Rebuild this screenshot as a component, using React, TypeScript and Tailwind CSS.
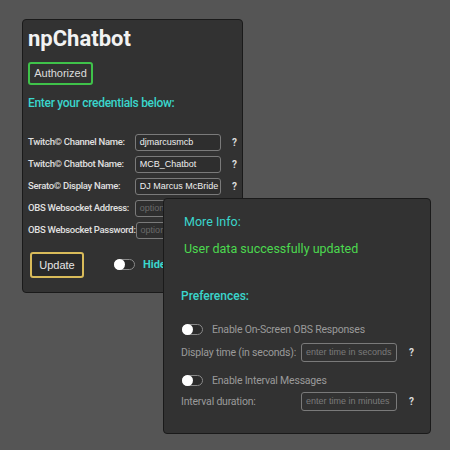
import React from "react";

const FONT = { fontFamily: 'Roboto, "Noto Sans", sans-serif' };
const ARIAL = { fontFamily: '"Liberation Sans", Arial, sans-serif' };

const CREDS = [
  { label: "Twitch© Channel Name:", value: "djmarcusmcb" },
  { label: "Twitch© Chatbot Name:", value: "MCB_Chatbot" },
  { label: "Serato© Display Name:", value: "DJ Marcus McBride" },
  { label: "OBS Websocket Address:", value: "" },
  { label: "OBS Websocket Password:", value: "" },
];

function Toggle() {
  return (
    <span className="relative inline-block w-[21px] h-[11px] rounded-full border border-[#8a8a8a] bg-[#2b2b2b] shrink-0">
      <span className="absolute left-[-1px] top-[-1px] w-[11px] h-[11px] rounded-full bg-white" />
    </span>
  );
}

export default function App() {
  return (
    <div className="relative w-[450px] h-[450px] bg-[#555555] overflow-hidden" style={FONT}>
      {/* main window */}
      <div className="ml-[22px] mt-[19px] w-[221px] h-[274px] bg-[#323232] border border-[#1a1a1a] rounded-[4px] px-[5px] pt-[5px]">
        <h1 className="text-[22px] leading-[28px] font-bold text-[#f2f2f2]">npChatbot</h1>
        <button
          className="mt-[9px] w-[65px] h-[23px] rounded-[3px] border-2 border-[#3fc24a] text-[11px] text-[#dcdcdc]"
          style={ARIAL}
        >
          Authorized
        </button>
        <p className="mt-[9px] text-[12px] leading-[18px] font-medium tracking-[-0.3px] text-[#3ad6cc]">
          Enter your credentials below:
        </p>

        <div className="mt-[22px] flex flex-col gap-[5px]">
          {CREDS.map((c) => (
            <div key={c.label} className="flex items-center h-[17px]">
              <span className="w-[108px] text-[9.5px] font-medium tracking-[-0.3px] text-[#e0e0e0] whitespace-nowrap">
                {c.label}
              </span>
              <div
                className="w-[87px] h-[17px] rounded-[3px] border border-[#7a7a7a] bg-[#2e2e2e] px-[4px] flex items-center text-[9px] whitespace-nowrap overflow-hidden"
                style={ARIAL}
              >
                {c.value ? (
                  <span className="text-[#eeeeee]">{c.value}</span>
                ) : (
                  <span className="text-[#6a6a6a]">optional</span>
                )}
              </div>
              <span className="ml-[11px] text-[10px] font-bold text-[#dddddd]">?</span>
            </div>
          ))}
        </div>

        <div className="mt-[13px] flex items-center">
          <button
            className="ml-[2px] w-[54px] h-[26px] rounded-[3px] border-2 border-[#d9bb5a] bg-[#2a2a2a] text-[11px] text-[#e6e6e6]"
            style={ARIAL}
          >
            Update
          </button>
          <span className="ml-[30px]">
            <Toggle />
          </span>
          <span className="ml-[8px] text-[11px] font-bold text-[#3ad6cc] whitespace-nowrap">Hide Sensitive</span>
        </div>
      </div>

      {/* info window */}
      <div className="absolute left-[163px] top-[198px] w-[268px] h-[236px] bg-[#323232] border border-[#1a1a1a] rounded-[4px] pl-[17px] pt-[14px]">
        <p className="ml-[3px] text-[12.5px] leading-[18px] text-[#3ad6cc]">More Info:</p>
        <p className="ml-[3px] mt-[9px] text-[12.5px] leading-[18px] text-[#4cd94f]">User data successfully updated</p>
        <p className="mt-[29px] text-[12px] leading-[18px] font-medium text-[#3ad6cc]">Preferences:</p>

        <div className="mt-[19px] flex items-center h-[12px]">
          <span className="ml-[1px]"><Toggle /></span>
          <span className="ml-[9px] text-[10.5px] tracking-[-0.2px] text-[#9a9a9a] whitespace-nowrap">
            Enable On-Screen OBS Responses
          </span>
        </div>
        <div className="mt-[7px] flex items-center h-[19px]">
          <span className="w-[120px] text-[10.5px] tracking-[-0.2px] text-[#9a9a9a] whitespace-nowrap">
            Display time (in seconds):
          </span>
          <div
            className="w-[96px] h-[19px] rounded-[3px] border border-[#7a7a7a] px-[4px] flex items-center text-[9px] text-[#7a7a7a] whitespace-nowrap overflow-hidden"
            style={ARIAL}
          >
            enter time in seconds
          </div>
          <span className="ml-[12px] text-[10px] font-bold text-[#dddddd]">?</span>
        </div>

        <div className="mt-[13px] flex items-center h-[12px]">
          <span className="ml-[1px]"><Toggle /></span>
          <span className="ml-[9px] text-[10.5px] tracking-[-0.2px] text-[#9a9a9a] whitespace-nowrap">
            Enable Interval Messages
          </span>
        </div>
        <div className="mt-[5px] flex items-center h-[19px]">
          <span className="w-[120px] text-[10.5px] tracking-[-0.2px] text-[#9a9a9a] whitespace-nowrap">
            Interval duration:
          </span>
          <div
            className="w-[96px] h-[19px] rounded-[3px] border border-[#7a7a7a] px-[4px] flex items-center text-[9px] text-[#7a7a7a] whitespace-nowrap overflow-hidden"
            style={ARIAL}
          >
            enter time in minutes
          </div>
          <span className="ml-[12px] text-[10px] font-bold text-[#dddddd]">?</span>
        </div>
      </div>
    </div>
  );
}
